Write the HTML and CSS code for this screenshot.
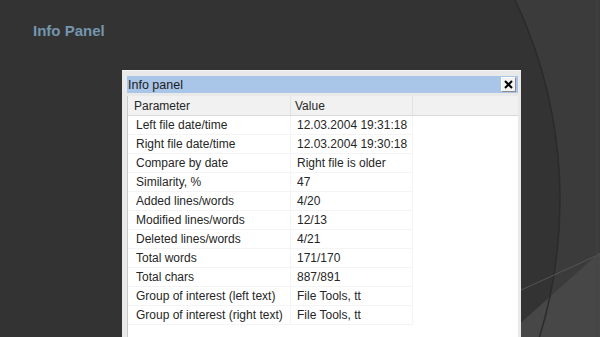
FILE: index.html
```html
<!DOCTYPE html>
<html lang="en">

<head>
    <meta charset="UTF-8">
    <meta name="viewport" content="width=device-width, initial-scale=1.0">
    <title>Info Panel</title>
    <link rel="stylesheet" href="styles.css">
</head>

<body>

    <div class="slide">
        <!-- background arcs of the slide theme -->
        <svg class="backdrop" width="600" height="337" viewBox="0 0 600 337">
            <circle cx="93" cy="200" r="467" fill="#333333" />
            <path d="M505 337 L600 252 L600 337 Z" fill="#474747" />
            <circle cx="93" cy="200" r="467" fill="none" stroke="#2b2b2b" stroke-width="1.5" />
            <line x1="519" y1="291" x2="600" y2="254" stroke="#555" stroke-width="1" />
            <line x1="597" y1="0" x2="597" y2="337" stroke="#444" stroke-width="1" />
        </svg>

        <h1 class="slideTitle">Info Panel</h1>

        <div class="dialog">
            <div class="titleBar">
                <span>Info panel</span>
                <div class="closeBtn">
                    <svg width="9" height="9" viewBox="0 0 9 9">
                        <path d="M1 1 L8 8 M8 1 L1 8" stroke="#000" stroke-width="2" />
                    </svg>
                </div>
            </div>
            <div class="listBox">
                <table class="infoTable">
                    <thead>
                        <tr>
                            <th class="colParam">Parameter</th>
                            <th class="colValue">Value</th>
                            <th class="colRest"></th>
                        </tr>
                    </thead>
                    <tbody>
                        <tr><td>Left file date/time</td><td>12.03.2004 19:31:18</td><td class="empty"></td></tr>
                        <tr><td>Right file date/time</td><td>12.03.2004 19:30:18</td><td class="empty"></td></tr>
                        <tr><td>Compare by date</td><td>Right file is older</td><td class="empty"></td></tr>
                        <tr><td>Similarity, %</td><td>47</td><td class="empty"></td></tr>
                        <tr><td>Added lines/words</td><td>4/20</td><td class="empty"></td></tr>
                        <tr><td>Modified lines/words</td><td>12/13</td><td class="empty"></td></tr>
                        <tr><td>Deleted lines/words</td><td>4/21</td><td class="empty"></td></tr>
                        <tr><td>Total words</td><td>171/170</td><td class="empty"></td></tr>
                        <tr><td>Total chars</td><td>887/891</td><td class="empty"></td></tr>
                        <tr><td>Group of interest (left text)</td><td>File Tools, tt</td><td class="empty"></td></tr>
                        <tr><td>Group of interest (right text)</td><td>File Tools, tt</td><td class="empty"></td></tr>
                    </tbody>
                </table>
            </div>
        </div>
    </div>

</body>

</html>
```

FILE: styles.css
```css
body {
    margin: 0;
    background-color: #3b3b3b;
    font-family: "Liberation Sans", Arial, sans-serif;
}

.slide {
    position: relative;
    width: 600px;
    height: 337px;
    overflow: hidden;
}

.backdrop {
    position: absolute;
    left: 0;
    top: 0;
    z-index: 0;
}

.slideTitle {
    position: relative;
    z-index: 1;
    margin: 0;
    padding: 22px 0 0 33px;
    font-size: 15px;
    line-height: 17px;
    font-weight: bold;
    color: #7596ae;
}

.dialog {
    position: relative;
    z-index: 1;
    margin: 31px 0 0 122px;
    width: 399px;
    height: 280px;
    box-sizing: border-box;
    padding: 5px 3px 0 5px;
    background-color: #e9e9e9;
    border-top: 1px solid #f6f6f6;
}

.titleBar {
    display: flex;
    align-items: center;
    justify-content: space-between;
    height: 17px;
    padding: 0 2px 0 1px;
    background-color: #a9c5e7;
    font-size: 12.5px;
    color: #1c1c1c;
}

.closeBtn {
    display: flex;
    justify-content: center;
    align-items: center;
    width: 13px;
    height: 13px;
    background-color: #f3f3f3;
    border: 1px solid #fdfdfd;
    border-right-color: #8c8c8c;
    border-bottom-color: #8c8c8c;
}

.listBox {
    height: 100%;
    margin-top: 3px;
    background-color: #fff;
    border-left: 1px solid #c9c9c9;
}

.infoTable {
    width: 100%;
    border-collapse: collapse;
    font-size: 12px;
    color: #262626;
}

.infoTable th {
    height: 19px;
    padding: 0 0 0 6px;
    text-align: left;
    font-weight: normal;
    background-color: #f1f1f1;
    border-bottom: 1px solid #d9d9d9;
    border-right: 1px solid #e2e2e2;
}

.infoTable th.colParam {
    width: 156px;
}

.infoTable th.colValue {
    width: 117px;
    padding-left: 4px;
}

.infoTable th.colRest {
    border-right: none;
}

.infoTable td {
    height: 18px;
    padding: 0 0 0 8px;
    white-space: nowrap;
    border-bottom: 1px solid #f4f4f4;
    border-right: 1px solid #f4f4f4;
}

.infoTable td + td {
    padding-left: 6px;
}

.infoTable td.empty {
    border: none;
}
```
